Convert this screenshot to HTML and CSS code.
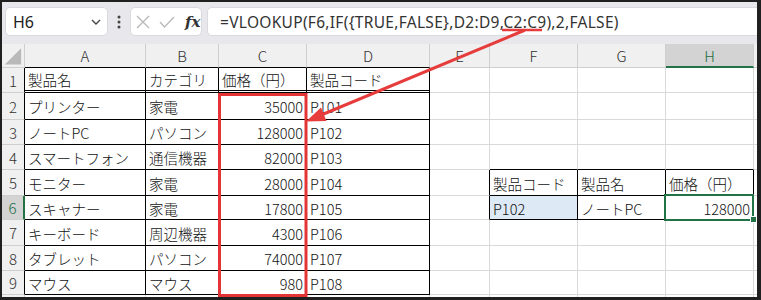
FILE: index.html
```html
<!DOCTYPE html>
<html lang="ja">
<head>
<meta charset="utf-8">
<link rel="stylesheet" href="styles.css">
</head>
<body>
<div class="frame">
  <div class="fbar">
    <div class="namebox"><span>H6</span>
      <svg class="chev" width="10" height="6" viewBox="0 0 10 6"><polyline points="1,1 5,5 9,1" fill="none" stroke="#444" stroke-width="1.4"/></svg>
    </div>
    <div class="dots"><svg width="4" height="14" viewBox="0 0 4 14"><circle cx="2" cy="2" r="1.5" fill="#444"/><circle cx="2" cy="7" r="1.5" fill="#444"/><circle cx="2" cy="12" r="1.5" fill="#444"/></svg></div>
    <div class="fxbox">
      <svg width="14" height="14" viewBox="0 0 14 14"><path d="M1 1 L13 13 M13 1 L1 13" stroke="#b8b8b8" stroke-width="1.3" fill="none"/></svg>
      <svg width="16" height="12" viewBox="0 0 16 12"><polyline points="1,6 5.5,11 15,1" stroke="#b8b8b8" stroke-width="1.3" fill="none"/></svg>
      <span class="fx">fx</span>
    </div>
    <div class="formula">=VLOOKUP(F6,IF({TRUE,FALSE},D2:D9,C2:C9),2,FALSE)</div>
  </div>
  <div class="sheet">
    <div class="c h corner"><svg width="23" height="24" viewBox="0 0 23 24"><polygon points="20,4 20,21 3,21" fill="#b9b9b9"/></svg></div>
    <div class="c h ab">A</div><div class="c h ab">B</div><div class="c h ab">C</div><div class="c h ab">D</div><div class="c h">E</div><div class="c h">F</div><div class="c h">G</div><div class="c h colsel">H</div><div class="c h"></div>

    <div class="c h lb">1</div><div class="c tb dbl">製品名</div><div class="c tb dbl">カテゴリ</div><div class="c tb dbl">価格（円）</div><div class="c tb dbl">製品コード</div><div class="c"></div><div class="c"></div><div class="c"></div><div class="c"></div><div class="c"></div>

    <div class="c h lb">2</div><div class="c tb">プリンター</div><div class="c tb">家電</div><div class="c tb r">35000</div><div class="c tb">P101</div><div class="c"></div><div class="c"></div><div class="c"></div><div class="c"></div><div class="c"></div>

    <div class="c h lb">3</div><div class="c tb">ノートPC</div><div class="c tb">パソコン</div><div class="c tb r">128000</div><div class="c tb">P102</div><div class="c"></div><div class="c"></div><div class="c"></div><div class="c"></div><div class="c"></div>

    <div class="c h lb">4</div><div class="c tb">スマートフォン</div><div class="c tb">通信機器</div><div class="c tb r">82000</div><div class="c tb">P103</div><div class="c"></div><div class="c ab"></div><div class="c ab"></div><div class="c ab"></div><div class="c"></div>

    <div class="c h lb">5</div><div class="c tb">モニター</div><div class="c tb">家電</div><div class="c tb r">28000</div><div class="c tb">P104</div><div class="c lb"></div><div class="c tb">製品コード</div><div class="c tb">製品名</div><div class="c tb">価格（円）</div><div class="c"></div>

    <div class="c h lb rowsel">6</div><div class="c tb">スキャナー</div><div class="c tb">家電</div><div class="c tb r">17800</div><div class="c tb">P105</div><div class="c lb"></div><div class="c tb fill">P102</div><div class="c tb">ノートPC</div><div class="c tb r active">128000</div><div class="c"></div>

    <div class="c h lb">7</div><div class="c tb">キーボード</div><div class="c tb">周辺機器</div><div class="c tb r">4300</div><div class="c tb">P106</div><div class="c"></div><div class="c"></div><div class="c"></div><div class="c"></div><div class="c"></div>

    <div class="c h lb">8</div><div class="c tb">タブレット</div><div class="c tb">パソコン</div><div class="c tb r">74000</div><div class="c tb">P107</div><div class="c"></div><div class="c"></div><div class="c"></div><div class="c"></div><div class="c"></div>

    <div class="c h lb">9</div><div class="c tb">マウス</div><div class="c tb">マウス</div><div class="c tb r">980</div><div class="c tb">P108</div><div class="c"></div><div class="c"></div><div class="c"></div><div class="c"></div><div class="c"></div>

    <div class="c h"></div><div class="c"></div><div class="c"></div><div class="c"></div><div class="c"></div><div class="c"></div><div class="c"></div><div class="c"></div><div class="c"></div><div class="c"></div>
  </div>
</div>
<svg class="overlay" width="761" height="300" viewBox="0 0 761 300">
  <line x1="502" y1="30" x2="542" y2="30" stroke="#e63c3c" stroke-width="2.5"/>
  <line x1="524" y1="30.5" x2="320" y2="115.5" stroke="#e63c3c" stroke-width="3" stroke-linecap="round"/>
  <polygon points="306,121.5 326.5,121 321,107.5" fill="#e63c3c"/>
  <rect x="219.5" y="94.5" width="86.5" height="201" fill="none" stroke="#e33535" stroke-width="3"/>
</svg>
</body>
</html>
```

FILE: styles.css
```css
html, body {
  margin: 0;
  padding: 0;
}
body {
  position: relative;
  width: 761px;
  height: 300px;
  overflow: hidden;
  background: #202020;
  font-family: "Noto Sans CJK JP", "Noto Sans", sans-serif;
}
.frame {
  margin: 2px 0 0 2px;
  width: 755px;
  height: 295px;
  overflow: hidden;
  background: #fff;
}
.fbar {
  box-sizing: border-box;
  height: 42px;
  background: #e8e8ec;
  display: flex;
  align-items: flex-start;
  padding: 5px 0 0 3px;
}
.namebox {
  box-sizing: border-box;
  width: 103px;
  height: 29px;
  background: #fff;
  border: 1px solid #dadade;
  border-radius: 5px;
  display: flex;
  align-items: center;
  justify-content: space-between;
  padding: 0 6px 0 7px;
  font-family: "Noto Sans", sans-serif;
  font-size: 16px;
  color: #222;
}
.dots {
  width: 22px;
  height: 29px;
  display: flex;
  align-items: center;
  justify-content: center;
}
.fxbox {
  box-sizing: border-box;
  width: 72px;
  height: 29px;
  background: #fff;
  border: 1px solid #dadade;
  border-radius: 5px;
  display: flex;
  align-items: center;
  gap: 9px;
  padding-left: 5px;
}
.fx {
  font-family: "DejaVu Serif", serif;
  font-style: italic;
  font-weight: bold;
  font-size: 15px;
  color: #333;
  margin-left: 1px;
}
.formula {
  box-sizing: border-box;
  flex: 1;
  height: 29px;
  margin-left: 5px;
  background: #fff;
  border: 1px solid #dadade;
  border-right: none;
  border-radius: 5px 0 0 5px;
  display: flex;
  align-items: center;
  padding-left: 12px;
  font-family: "Noto Sans", sans-serif;
  font-size: 15.5px;
  letter-spacing: 0.3px;
  color: #333;
  white-space: nowrap;
}
.sheet {
  display: grid;
  grid-template-columns: 23px 121px 73px 88px 123px 60px 88px 88px 88px 20px;
  grid-template-rows: 24px 25px 27px 25px 25px 26px 24px 26px 25px 24px 20px;
}
.c {
  box-sizing: border-box;
  border-right: 1px solid #d9d9d9;
  border-bottom: 1px solid #d9d9d9;
  display: flex;
  align-items: center;
  padding: 1px 3px 0 3px;
  font-size: 14.5px;
  font-weight: 300;
  color: #111;
  white-space: nowrap;
  overflow: hidden;
}
.h {
  background: #f0f0f0;
  justify-content: center;
  border-right-color: #cfcfcf;
  border-bottom-color: #cfcfcf;
  color: #333;
  font-size: 15px;
  padding: 0;
}
.corner {
  padding: 0;
}
.r {
  justify-content: flex-end;
}
.tb {
  border-right-color: #000;
  border-bottom-color: #000;
}
.lb {
  border-right-color: #000;
}
.ab {
  border-bottom-color: #000;
}
.dbl {
  border-bottom: 3px double #000;
}
.colsel {
  background: #d3d3d3;
  color: #1d6b40;
  border-bottom: 2px solid #217346;
}
.rowsel {
  background: #d3d3d3;
  color: #1d6b40;
  border-right: 2px solid #217346;
}
.fill {
  background: #dde9f5;
}
.active {
  position: relative;
  overflow: visible;
}
.active::after {
  content: "";
  position: absolute;
  left: -2px;
  top: -2px;
  right: -1px;
  bottom: -2px;
  border: 2px solid #217346;
}
.active::before {
  content: "";
  position: absolute;
  right: -4px;
  bottom: -4px;
  width: 5px;
  height: 5px;
  background: #217346;
  border: 1px solid #fff;
  z-index: 2;
}
.overlay {
  position: absolute;
  left: 0;
  top: 0;
  pointer-events: none;
}
```
